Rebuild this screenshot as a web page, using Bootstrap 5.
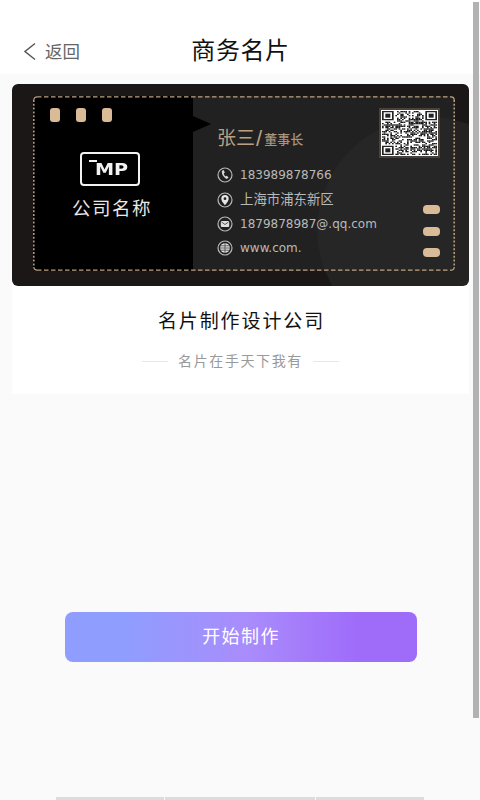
<!DOCTYPE html>
<html lang="zh">
<head>
<meta charset="utf-8">
<title>商务名片</title>
<link rel="stylesheet" href="https://cdn.jsdelivr.net/npm/bootstrap@5.3.0/dist/css/bootstrap.min.css">
<style>
html,body{height:800px;overflow:hidden}
body{background:#fafafa;font-family:"Liberation Sans","Noto Sans CJK SC",sans-serif;color:#111}
.shell{height:800px}
.topbar{padding:28px 0 0 0;background:#fff;display:grid;grid-template-columns:1fr auto 1fr;align-items:center;height:74px}
.backlink{padding-left:23px;gap:9px;color:#666;font-size:17.500px;line-height:1;text-decoration:none}
.backlink span{position:relative;top:2px}
.pagetitle{font-size:24px;letter-spacing:.6px;line-height:46px;font-weight:400;color:#111;margin:0;padding-left:1px}
.sheet{margin:10px 11px 0 12px;background:#fff;height:310px;border:0;border-radius:0}
.bizcard{height:202px;background:radial-gradient(circle at 418px 146px,#252322 0,#252322 112px,#1a1716 113px);border-radius:6px;padding:12px 14px 15px 21px;position:relative;overflow:hidden}
.bizinner{height:100%;position:relative;display:flex;border-radius:4px;overflow:hidden;background:#232323}
.dashframe{position:absolute;left:21px;top:12px;width:422px;height:175px;pointer-events:none;z-index:3}
.leftpanel{width:160px;background:#000;flex:none;padding:12px 0 0 17px;position:relative;z-index:2}
.leftpanel::after{content:"";position:absolute;left:100%;top:20px;border-left:18px solid #000;border-top:8px solid transparent;border-bottom:8px solid transparent}
.tanpill{background:#d9bb98;border-radius:3px;display:block}
.vpill{width:10px;height:14px}
.pillrow{gap:16px}
.hpill{width:17px;height:9px;border-radius:4px}
.logobox{width:60px;height:34px;border:2px solid #f2f2f2;border-radius:4px;margin:30px 0 0 30px;color:#f2f2f2;position:relative;padding:11px 0 0 13px}
.logomark{display:block;font:700 15px/11px "DejaVu Sans",sans-serif;transform:scaleX(1.280);transform-origin:left center}
.logobox::before{content:"";position:absolute;left:7px;top:6px;width:8px;height:2px;background:#f2f2f2}
.logotext{width:160px;margin:13px 0 0 -18px;text-align:center;color:#e8e8e8;font-size:18.500px;letter-spacing:1.500px;line-height:20px;font-weight:400}
.rightpanel{flex:1;position:relative;padding:31px 0 0 24px;background:radial-gradient(circle at 237px 134px,#262626 0,#262626 112px,#212121 113px)}
.holder{font-size:19px;line-height:24px;color:#b9a084;display:flex;align-items:center;white-space:nowrap}
.holder small{font-size:13px;font-weight:500;color:#a8937b;position:relative;top:1px}
.slash{font-size:22px;font-weight:300;margin:0 2px 0 1px}
.inforow{height:24.4px;gap:7px;color:#b9b9b9;font:12px/1 "DejaVu Sans","Noto Sans CJK SC",sans-serif}
.infolist{margin-top:12px}
.inforow svg{flex:none}
.cjkline{font-size:13.400px}
.qrframe{position:absolute;right:15px;top:12px;width:61px;height:50px;border:2px solid #4a4239;background:#fff;padding:1px}
.qrframe svg{display:block;width:100%;height:100%;filter:blur(.45px)}
.pillstack{position:absolute;right:15px;top:109px;gap:12.500px}
.sheetname{font-size:19px;letter-spacing:1.900px;line-height:24px;margin:24px 0 0;font-weight:400;color:#111;padding-left:2px}
.slogan{margin-top:17px;gap:10px;color:#999;font-size:14px;letter-spacing:1.600px;line-height:20px}
.slogan i{display:block;width:26px;height:1px;background:#e8e8e8}
.startbtn{display:block;width:352px;height:50px;margin:218px 0 0 65px;padding:0;border:0;border-radius:8px;background:linear-gradient(90deg,#8f9dff 0%,#8f9dff 17%,#a98cfb 52%,#9f6cfa 83%,#9f6cfa 100%);color:#fff;font-size:18px;letter-spacing:1.400px;line-height:50px}
.startbtn:hover{color:#fff}
.softkeys{margin-top:auto;gap:1px;height:3px}
.softkeys span{display:block;height:3px;background:#dcdcdc}
.softkeys span:nth-child(1),.softkeys span:nth-child(3){width:108px}
.softkeys span:nth-child(2){width:150px}
.scrollthumb{position:absolute;right:1px;top:2px;width:6px;height:716px;background:#b2b2b2}
</style>
</head>
<body class="position-relative">
<div class="shell d-flex flex-column">
  <header class="topbar">
    <a class="backlink d-flex align-items-center" href="#">
      <svg width="13" height="19" viewBox="0 0 13 19"><path d="M12 1.500 2 9.500l10 8" fill="none" stroke="#555" stroke-width="1.500"/></svg>
      <span>返回</span>
    </a>
    <h1 class="pagetitle">商务名片</h1>
    <span></span>
  </header>

  <section class="card sheet">
    <div class="bizcard">
      <div class="bizinner">
        <div class="leftpanel">
          <div class="d-flex pillrow"><span class="tanpill vpill"></span><span class="tanpill vpill"></span><span class="tanpill vpill"></span></div>
          <div class="logobox"><span class="logomark">MP</span></div>
          <div class="logotext">公司名称</div>
        </div>
        <div class="rightpanel">
          <div class="holder">张三<span class="slash">/</span><small>董事长</small></div>
          <div class="infolist">
            <div class="inforow d-flex align-items-center">
              <svg width="16" height="16" viewBox="0 0 16 16"><circle cx="8" cy="8" r="7" fill="none" stroke="#b8b8b8" stroke-width="1.200"/><path d="M5 3.800c-.9 2.600 1.600 7 5 8.300l1.600-1.800-2-1.600-1 .7c-1-.8-1.600-1.800-1.800-3l1-.8-1-2.500z" fill="#d8d8d8"/></svg>
              <span>183989878766</span>
            </div>
            <div class="inforow d-flex align-items-center">
              <svg width="16" height="16" viewBox="0 0 16 16"><circle cx="8" cy="8" r="7" fill="none" stroke="#b8b8b8" stroke-width="1.200"/><path d="M8 3a3.700 3.700 0 0 0-3.700 3.700C4.300 9.300 8 13 8 13s3.700-3.700 3.700-6.300A3.700 3.700 0 0 0 8 3z" fill="#e6e6e6"/><circle cx="8" cy="6.700" r="1.400" fill="#222"/></svg>
              <span class="cjkline">上海市浦东新区</span>
            </div>
            <div class="inforow d-flex align-items-center">
              <svg width="16" height="16" viewBox="0 0 16 16"><circle cx="8" cy="8" r="7" fill="none" stroke="#b8b8b8" stroke-width="1.200"/><rect x="3.800" y="5" width="8.400" height="6" rx="1" fill="#e0e0e0"/><path d="M4.500 6 8 8.500 11.500 6" fill="none" stroke="#333" stroke-width=".8"/></svg>
              <span>1879878987@.qq.com</span>
            </div>
            <div class="inforow d-flex align-items-center">
              <svg width="16" height="16" viewBox="0 0 16 16"><circle cx="8" cy="8" r="7" fill="none" stroke="#b8b8b8" stroke-width="1.200"/><circle cx="8" cy="8" r="4.800" fill="#ddd"/><path d="M3.200 8h9.600M8 3.200v9.600M4 5.800h8M4 10.200h8" stroke="#333" stroke-width=".7"/></svg>
              <span>www.com.</span>
            </div>
          </div>
          <div class="qrframe"><svg id="qrcode" viewBox="0 0 33 33" preserveAspectRatio="none"></svg></div>
          <div class="pillstack d-flex flex-column"><span class="tanpill hpill"></span><span class="tanpill hpill"></span><span class="tanpill hpill"></span></div>
        </div>
      </div>
      <svg class="dashframe" viewBox="0 0 422 175" fill="none" stroke="#bfa27f" stroke-width="1.200">
        <path d="M4 .8H418" stroke-dasharray="4.500 2.500"/>
        <path d="M4 174.200H418" stroke-dasharray="4.500 2.500"/>
        <path d="M.8 4V171" stroke-dasharray="2 1.800" stroke-width="1.500"/>
        <path d="M421.200 4V171" stroke-dasharray="2 1.800" stroke-width="1.500"/>
        <path d="M.8 4A3.200 3.200 0 0 1 4 .8M418 .8A3.200 3.200 0 0 1 421.200 4M421.200 171A3.200 3.200 0 0 1 418 174.200M4 174.200A3.200 3.200 0 0 1 .8 171"/>
      </svg>
    </div>
    <h2 class="sheetname text-center">名片制作设计公司</h2>
    <div class="slogan d-flex justify-content-center align-items-center"><i></i><span>名片在手天下我有</span><i></i></div>
  </section>

  <button type="button" class="btn startbtn">开始制作</button>

  <div class="softkeys d-flex justify-content-center"><span></span><span></span><span></span></div>
</div>
<div class="scrollthumb"></div>

<script src="https://cdn.jsdelivr.net/npm/bootstrap@5.3.0/dist/js/bootstrap.bundle.min.js"></script>
<script>
(function(){
  var n=33,s=7,o='',finder=function(x,y){return '<path d="M'+x+' '+y+'h7v7h-7zM'+(x+1)+' '+(y+1)+'v5h5v-5z" fill-rule="evenodd" fill="#222"/><rect x="'+(x+2)+'" y="'+(y+2)+'" width="3" height="3" fill="#222"/>';};
  for(var y=0;y<n;y++)for(var x=0;x<n;x++){
    if((x<8&&y<8)||(x>24&&y<8)||(x<8&&y>24))continue;
    s=(s*1103515245+12345)&2147483647;
    if((s>>16)%100<52)o+='<rect x="'+x+'" y="'+y+'" width="1" height="1" fill="#1c1c1c"/>';
  }
  document.getElementById('qrcode').innerHTML=o+finder(0,0)+finder(26,0)+finder(0,26);
})();
</script>
</body>
</html>
